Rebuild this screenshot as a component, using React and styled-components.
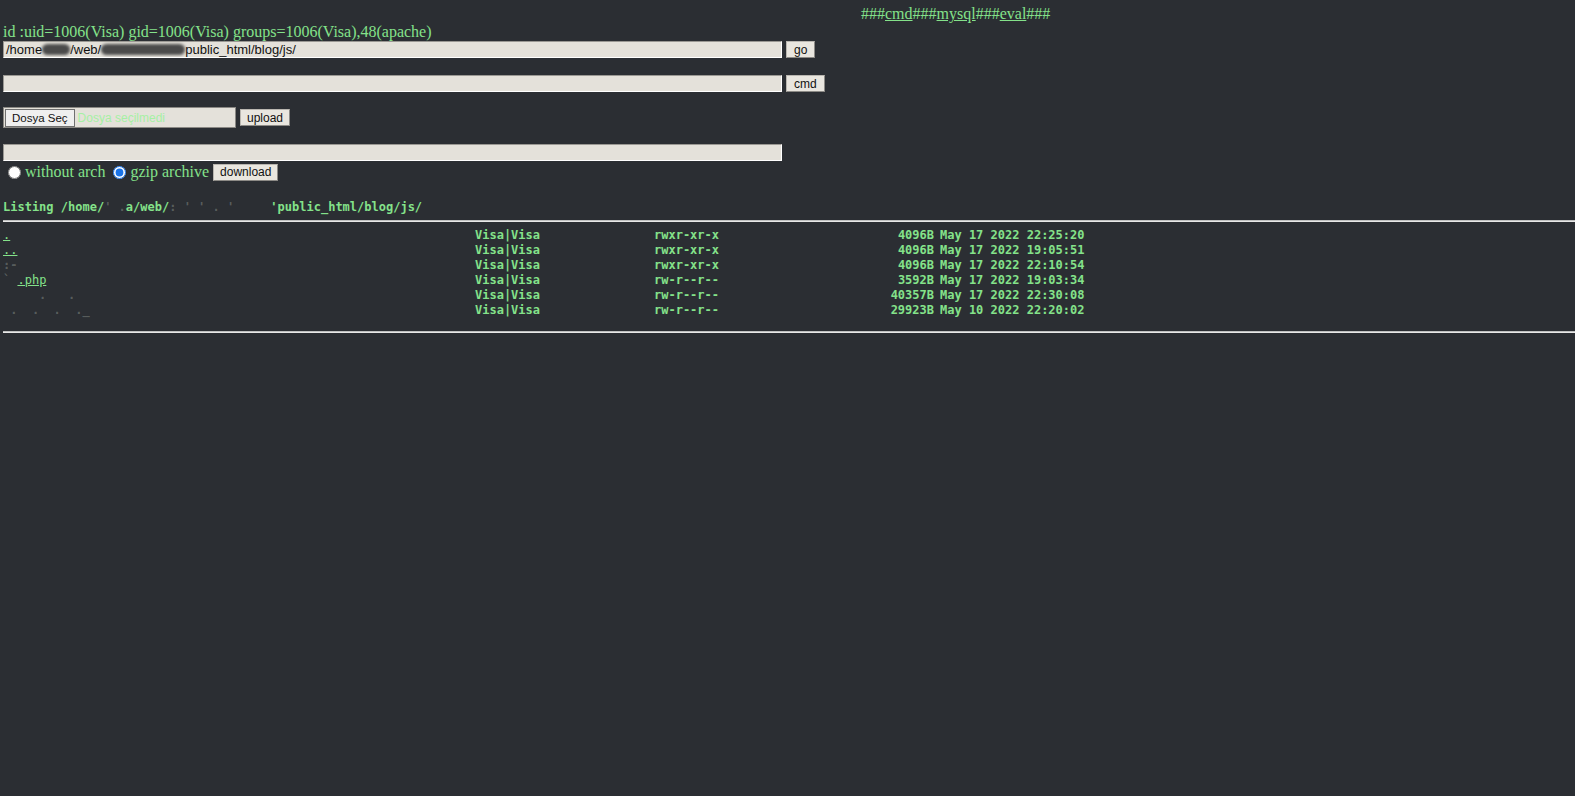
import React from 'react';
import styled, { createGlobalStyle } from 'styled-components';

const GlobalStyle = createGlobalStyle`
	html, body {
		margin: 0;
		padding: 0;
		background: #2b2e33;
		min-height: 100%;
	}
	body {
		font-family: 'Liberation Serif', 'Times New Roman', serif;
		font-size: 16px;
		color: #84e28a;
	}
`;

const green = '#84e28a';
const fieldBg = '#e4e1da';

const Page = styled.div`
	padding: 5px 0 0 3px;
	min-height: 796px;
	box-sizing: border-box;
	background: #2b2e33;
`;

const TopNav = styled.div`
	padding-left: 858px;
	line-height: 18px;
	a {
		color: ${green};
		text-decoration: underline;
	}
`;

const IdLine = styled.div`
	line-height: 18px;
`;

const FormRow = styled.div`
	display: flex;
	align-items: center;
	gap: 4px;
	margin-top: ${p => p.$top || 0}px;
	height: ${p => p.$h || 17}px;
`;

const Field = styled.div`
	width: ${p => p.$w || 779}px;
	height: 17px;
	box-sizing: border-box;
	background: ${fieldBg};
	border-top: 1px solid #9a9893;
	border-left: 1px solid #9a9893;
	border-bottom: 1px solid #ffffff;
	border-right: 1px solid #ffffff;
	font-family: 'Liberation Sans', Arial, sans-serif;
	font-size: 13px;
	line-height: 15px;
	color: #111;
	padding-left: 2px;
	display: flex;
	align-items: center;
	white-space: pre;
	overflow: hidden;
`;

const Redacted = styled.span`
	display: inline-block;
	width: ${p => p.$w}px;
	height: 11px;
	border-radius: 6px;
	background: #4a4a4a;
	filter: blur(1.5px);
`;

const Button = styled.div`
	box-sizing: border-box;
	height: ${p => p.$h || 17}px;
	padding: 0 ${p => p.$pad || 7}px;
	background: #e9e6df;
	border: 1px solid #b9b6b0;
	border-right-color: #8c8a86;
	border-bottom-color: #8c8a86;
	font-family: 'Liberation Sans', Arial, sans-serif;
	font-size: 12px;
	color: #111;
	display: flex;
	align-items: center;
`;

const FileBox = styled.div`
	width: 233px;
	height: 21px;
	box-sizing: border-box;
	background: ${fieldBg};
	border: 1px solid #8a8884;
	display: flex;
	align-items: center;
	gap: 3px;
	padding-left: 1px;
	font-family: 'Liberation Sans', Arial, sans-serif;
	font-size: 12px;
`;

const FileButton = styled(Button)`
	height: 18px;
	border-color: #707070;
	background: #efefef;
	padding: 0 6px;
	font-size: 11.5px;
`;

const FileNote = styled.span`
	color: #a6f0a4;
`;

const RadioLabel = styled.label`
	display: flex;
	align-items: center;
	gap: 4px;
	margin-left: ${p => p.$ml || 0}px;
	line-height: 18px;
	input {
		margin: 0;
		width: 13px;
		height: 13px;
		accent-color: #1a73e8;
	}
`;

const ListingTitle = styled.div`
	font-family: 'DejaVu Sans Mono', 'Liberation Mono', monospace;
	font-weight: bold;
	font-size: 12px;
	margin-top: 18px;
	line-height: 16px;
	white-space: pre;
`;

const Faint = styled.span`
	color: ${p => (p.$dim ? 'rgba(200, 210, 200, 0.3)' : 'transparent')};
`;

const Rule = styled.div`
	height: 2px;
	margin-top: ${p => p.$top || 0}px;
	border-top: 1px solid #bfc0c0;
	border-bottom: 1px solid #e8e8e8;
	box-sizing: border-box;
`;

const Rows = styled.div`
	margin-top: 6px;
	display: grid;
	grid-template-columns: 472px 179px 203px 77px 1fr;
	font-family: 'DejaVu Sans Mono', 'Liberation Mono', monospace;
	font-weight: bold;
	font-size: 12px;
	line-height: 15px;
	white-space: pre;
`;

const Name = styled.a`
	color: ${green};
	font-weight: normal;
	text-decoration: ${p => (p.$link ? 'underline' : 'none')};
`;

const Size = styled.span`
	text-align: right;
`;

const Stamp = styled.span`
	padding-left: 6px;
`;

const files = [
	{ name: '.', link: true, perms: 'rwxr-xr-x', size: '4096B', date: 'May 17 2022 22:25:20' },
	{ name: '..', link: true, perms: 'rwxr-xr-x', size: '4096B', date: 'May 17 2022 19:05:51' },
	{ name: '', faint: ':-', perms: 'rwxr-xr-x', size: '4096B', date: 'May 17 2022 22:10:54' },
	{ name: '.php', faint: '` ', link: true, perms: 'rw-r--r--', size: '3592B', date: 'May 17 2022 19:03:34' },
	{ name: '', faint: '     .   .', perms: 'rw-r--r--', size: '40357B', date: 'May 17 2022 22:30:08' },
	{ name: '', faint: ' .  .  .  ._', perms: 'rw-r--r--', size: '29923B', date: 'May 10 2022 22:20:02' }
];

const App = () => {
	return (
		<Page>
			<GlobalStyle />
			<TopNav>
				###<a href='#cmd'>cmd</a>###<a href='#mysql'>mysql</a>###<a href='#eval'>eval</a>###
			</TopNav>
			<IdLine>id :uid=1006(Visa) gid=1006(Visa) groups=1006(Visa),48(apache)</IdLine>

			<FormRow $top={0}>
				<Field>
					/home<Redacted $w={28} />/web/<Redacted $w={84} />public_html/blog/js/
				</Field>
				<Button $pad={7}>go</Button>
			</FormRow>

			<FormRow $top={17}>
				<Field />
				<Button $pad={7}>cmd</Button>
			</FormRow>

			<FormRow $top={15} $h={21}>
				<FileBox>
					<FileButton>Dosya Seç</FileButton>
					<FileNote>Dosya seçilmedi</FileNote>
				</FileBox>
				<Button $pad={6}>upload</Button>
			</FormRow>

			<FormRow $top={16}>
				<Field />
			</FormRow>

			<FormRow $top={2} $h={18}>
				<RadioLabel $ml={5}>
					<input type='radio' name='arch' readOnly />
					without arch
				</RadioLabel>
				<RadioLabel $ml={4}>
					<input type='radio' name='arch' defaultChecked />
					gzip archive
				</RadioLabel>
				<Button $pad={6} $h={17}>download</Button>
			</FormRow>

			<ListingTitle>
				Listing /home/<Faint $dim>' .</Faint>a/web/<Faint $dim>: ' ' . '</Faint><Faint>     </Faint>'public_html/blog/js/
			</ListingTitle>
			<Rule $top={5} />

			<Rows>
				{files.map((f, i) => (
					<React.Fragment key={i}>
						<span>
							{f.faint && <Faint $dim>{f.faint}</Faint>}
							<Name href='#' $link={f.link}>{f.name}</Name>
						</span>
						<span>Visa|Visa</span>
						<span>{f.perms}</span>
						<Size>{f.size}</Size>
						<Stamp>{f.date}</Stamp>
					</React.Fragment>
				))}
			</Rows>
			<Rule $top={13} />
		</Page>
	);
};

export default App;
